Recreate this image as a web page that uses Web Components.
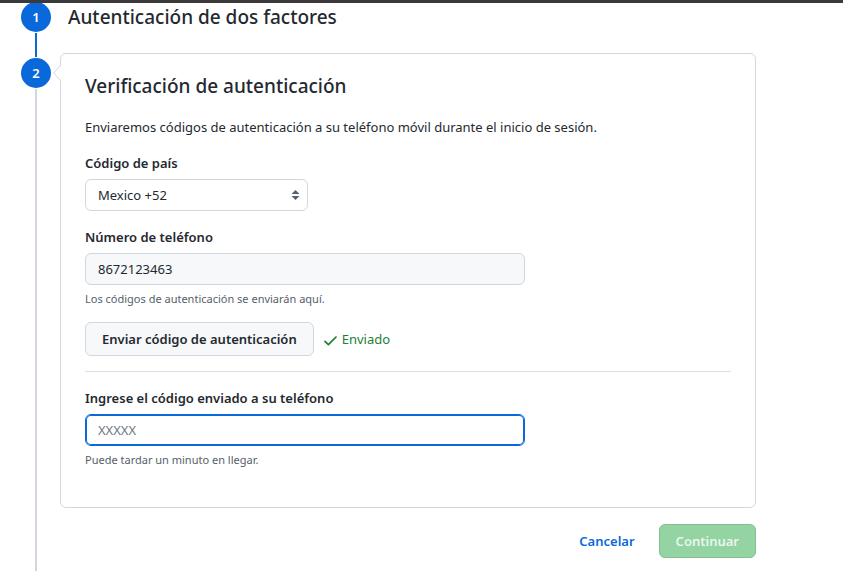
<!DOCTYPE html>
<html lang="es">
<head>
<meta charset="utf-8">
<meta name="viewport" content="width=device-width, initial-scale=1">
<title>Autenticación de dos factores</title>
<style>
  html {
    --fg: #24292f; --muted: #57606a; --line: #d0d7de; --accent: #0969da;
    --subtle: #f6f8fa; --ok: #1a7f37;
    --text: 13px; --small: 11px; --title: 19px;
    font-family: "Noto Sans", "Open Sans", sans-serif;
    color: var(--fg);
    background: #fff;
  }
  body { margin: 0; }
</style>
</head>
<body>
<setup-page></setup-page>
<script>
const define = (name, markup, setup) => {
  const template = document.createElement('template');
  template.innerHTML = markup;
  customElements.define(name, class extends HTMLElement {
    connectedCallback() {
      if (this.shadowRoot) return;
      const root = this.attachShadow({ mode: 'open' });
      root.append(template.content.cloneNode(true));
      if (setup) setup(this, root);
    }
  });
};

define('wizard-step', `
<style>
  :host { display: grid; grid-template-columns: 30px minmax(0, 1fr); column-gap: 9px; }
  .rail { display: flex; flex-direction: column; align-items: center; gap: 1px; }
  .lead { width: 2px; height: 4px; background: var(--accent); }
  :host([first]) .lead { display: none; }
  .number { width: 30px; height: 30px; flex: none; border-radius: 50%; background: var(--accent);
    color: #fff; font-size: var(--text); font-weight: 600; line-height: 30px; text-align: center; }
  .line { width: 2px; flex: 1; background: var(--line); }
  :host([done]) .line { background: var(--accent); }
</style>
<div class="rail"><span class="lead"></span><span class="number"></span><span class="line"></span></div>
<div class="content"><slot></slot></div>`,
(host, root) => { root.querySelector('.number').textContent = host.getAttribute('number'); });

define('step-card', `
<style>
  :host { display: block; position: relative; border: 1px solid var(--line); border-radius: 6px;
    padding: 20px 24px 38px; background: #fff; }
  svg { position: absolute; left: -8px; top: 11px; }
</style>
<svg width="9" height="16" viewBox="0 0 9 16" aria-hidden="true">
  <path d="M9 0V16L8 15.5L1 8L8 .5Z" fill="#fff"/>
  <path d="M7.5 .5L.7 8L7.5 15.5" fill="none" stroke="#d0d7de"/>
</svg>
<slot></slot>`);

define('text-field', `
<style>
  :host { display: block; }
  label { display: block; font-size: var(--text); line-height: 22px; font-weight: 600; margin-bottom: 5px; }
  input { display: block; box-sizing: border-box; width: 100%; max-width: 440px; height: 32px; margin: 0;
    padding: 4px 12px; border: 1px solid var(--line); border-radius: 6px; outline: 0; background: #fff;
    font-family: inherit; font-size: var(--text); color: var(--fg); }
  input::placeholder { color: #6e7781; opacity: 1; }
  input:read-only { background: var(--subtle); }
  :host([active]) input { border-color: var(--accent); box-shadow: inset 0 0 0 1px var(--accent); }
  p { margin: 5px 0 0; font-size: var(--small); line-height: 18px; color: var(--muted); }
</style>
<label for="field"></label><input id="field" type="text" aria-describedby="note"><p id="note"></p>`,
(host, root) => {
  const input = root.querySelector('input');
  root.querySelector('label').textContent = host.getAttribute('label');
  root.querySelector('p').textContent = host.getAttribute('note');
  input.value = host.getAttribute('value') || '';
  input.placeholder = host.getAttribute('placeholder') || '';
  input.readOnly = host.hasAttribute('readonly');
});

define('country-field', `
<style>
  :host { display: block; }
  label { display: block; font-size: var(--text); line-height: 22px; font-weight: 600; margin-bottom: 5px; }
  .box { display: grid; width: 223px; align-items: center; }
  select, svg { grid-area: 1 / 1; }
  select { appearance: none; box-sizing: border-box; width: 100%; height: 32px; margin: 0; padding: 4px 24px 4px 12px;
    border: 1px solid var(--line); border-radius: 6px; background: #fff; color: var(--fg);
    font-family: inherit; font-size: var(--text); }
  svg { justify-self: end; margin-right: 8px; pointer-events: none; }
</style>
<label for="country">Código de país</label>
<div class="box">
  <select id="country"><option>Mexico +52</option></select>
  <svg width="9" height="10" viewBox="0 0 9 10" aria-hidden="true"><path d="M4.5 0L8.5 4H.5ZM.5 6H8.5L4.5 10Z" fill="#57606a"/></svg>
</div>`);

define('action-button', `
<style>
  :host { display: block; }
  button { box-sizing: border-box; height: 34px; padding: 0 16px; border: 1px solid var(--line); border-radius: 6px;
    display: block; background: var(--subtle); color: var(--fg); white-space: nowrap;
    font-family: inherit; font-size: var(--text); font-weight: 600; }
  :host([primary]) button { background: #94d3a2; border-color: #83bf91; color: #e9f6ec; }
</style>
<button type="button"><slot></slot></button>`,
(host, root) => { root.querySelector('button').disabled = host.hasAttribute('disabled'); });

define('sent-status', `
<style>
  :host { display: flex; align-items: center; gap: 5px; color: var(--ok); font-size: var(--text); line-height: 22px; }
  svg { margin-top: 3px; }
</style>
<svg width="13" height="10" viewBox="0 0 13 10" aria-hidden="true"><path d="M1 5.3L4.4 8.6L12 1" fill="none" stroke="#1a7f37" stroke-width="1.7" stroke-linecap="round" stroke-linejoin="round"/></svg>
<span><slot></slot></span>`);

define('setup-page', `
<style>
  :host { display: flex; flex-direction: column; min-height: 100vh; }
  .bar { position: relative; height: 3px; margin-bottom: -1px; background: #3b393b; }
  main { flex: 1; display: flex; flex-direction: column; padding: 0 87px 0 21px; }
  wizard-step[done] { height: 51px; }
  wizard-step:last-child { flex: 1; }
  h1, h2 { margin: 0; font-size: var(--title); font-weight: 500; }
  h1 { padding-left: 8px; line-height: 30px; }
  h2 { line-height: 24px; margin-bottom: 18px; }
  p { margin: 0 0 14px; font-size: var(--text); line-height: 22px; }
  country-field { margin-bottom: 15px; }
  .send { display: flex; align-items: center; gap: 10px; margin-top: 14px; }
  hr { border: 0; height: 1px; margin: 15px 0; background: #d8dee4; }
  footer { display: flex; justify-content: flex-end; align-items: center; gap: 24px; margin-top: 16px; }
  a { color: var(--accent); font-size: var(--text); font-weight: 600; text-decoration: none; }
</style>
<div class="bar"></div>
<main>
<wizard-step number="1" first done><h1>Autenticación de dos factores</h1></wizard-step>
<wizard-step number="2">
  <step-card>
    <h2>Verificación de autenticación</h2>
    <p>Enviaremos códigos de autenticación a su teléfono móvil durante el inicio de sesión.</p>
    <country-field></country-field>
    <text-field label="Número de teléfono" value="8672123463" readonly note="Los códigos de autenticación se enviarán aquí."></text-field>
    <div class="send"><action-button>Enviar código de autenticación</action-button><sent-status>Enviado</sent-status></div>
    <hr>
    <text-field active label="Ingrese el código enviado a su teléfono" placeholder="XXXXX" note="Puede tardar un minuto en llegar."></text-field>
  </step-card>
  <footer><a href="#">Cancelar</a><action-button primary disabled>Continuar</action-button></footer>
</wizard-step>
</main>`);
</script>
</body>
</html>
